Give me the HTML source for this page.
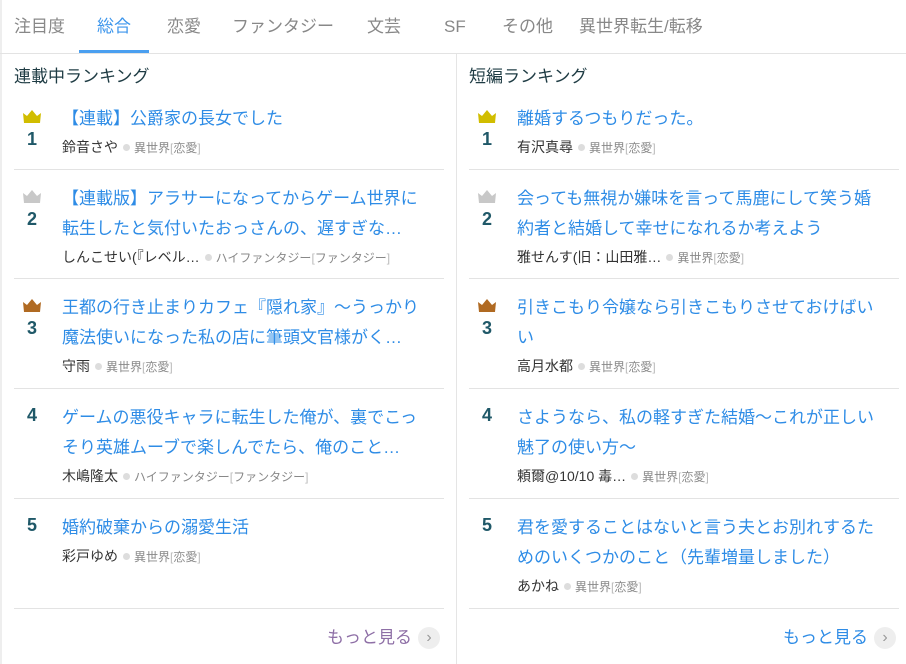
<!DOCTYPE html><html><head><meta charset="utf-8"><style>
*{margin:0;padding:0;box-sizing:border-box}
body{width:906px;height:664px;background:#fff;font-family:"Liberation Sans","Noto Sans CJK JP",sans-serif;position:relative;overflow:hidden}
.lb{position:absolute;left:0;top:0;width:2px;height:664px;background:#eee}
.tabs{position:absolute;left:0;top:0;width:906px;height:54px;border-bottom:1px solid #e3e3e3}
.tab{position:absolute;top:14px;font-size:17px;color:#888;line-height:26px}
.ul{position:absolute;left:79px;top:50px;width:70px;height:3px;background:#4a9ff0}
.vd{position:absolute;left:456px;top:54px;width:1px;height:610px;background:#e5e5e5}
.col{position:absolute;top:54px;width:430px}
.h{font-size:17px;color:#1f3c44;height:36px;line-height:46px;padding-left:0}
.row{position:relative;border-bottom:1px solid #e3e3e3}
.cr{position:absolute;left:9px;top:20px}
.n{position:absolute;left:4px;width:28px;text-align:center;font-size:18px;font-weight:bold;color:#1f5868}
.t{position:absolute;left:48px;top:14px;font-size:17px;line-height:30px;color:#2e8ce6;white-space:nowrap}
.a{font-size:14px;color:#333;line-height:26px}
.a .d{display:inline-block;width:7px;height:7px;border-radius:50%;background:#ddd;margin:0 4px 1px 5px}
.a .g{font-size:12px;color:#888}.a .g i{font-style:normal;color:#bbb}
.more{position:absolute;top:625px;font-size:17px;line-height:26px;display:flex;align-items:center}
.more span{display:inline-block;width:22px;height:22px;border-radius:50%;background:#eee;margin-left:6px;text-align:center;font-size:16px;line-height:21px;color:#999}
</style></head><body>
<div class="lb"></div>
<div class="tabs">
<div class="tab" style="left:14px">注目度</div>
<div class="tab" style="left:97px;color:#3d96ec">総合</div>
<div class="tab" style="left:167px">恋愛</div>
<div class="tab" style="left:232px">ファンタジー</div>
<div class="tab" style="left:367px">文芸</div>
<div class="tab" style="left:444px">SF</div>
<div class="tab" style="left:502px">その他</div>
<div class="tab" style="left:579px">異世界転生/転移</div>
<div class="ul"></div>
</div>
<div class="vd"></div>

<div class="col" style="left:14px">
<div class="h">連載中ランキング</div>
<div class="row" style="height:80px"><svg class="cr" width="18" height="13" viewBox="0 0 18 13"><path d="M0 3L4 6L9 0L14 6L18 3L17 13H1Z" fill="#d1bd00"/></svg><div class="n" style="top:39px">1</div>
<div class="t">【連載】公爵家の長女でした<div class="a">鈴音さや<span class="d"></span><span class="g">異世界<i>[</i>恋愛<i>]</i></span></div></div></div>
<div class="row" style="height:109px"><svg class="cr" width="18" height="13" viewBox="0 0 18 13"><path d="M0 3L4 6L9 0L14 6L18 3L17 13H1Z" fill="#c8c8c8"/></svg><div class="n" style="top:39px">2</div>
<div class="t">【連載版】アラサーになってからゲーム世界に<br>転生したと気付いたおっさんの、遅すぎな…<div class="a">しんこせい(『レベル…<span class="d"></span><span class="g">ハイファンタジー<i>[</i>ファンタジー<i>]</i></span></div></div></div>
<div class="row" style="height:110px"><svg class="cr" width="18" height="13" viewBox="0 0 18 13"><path d="M0 3L4 6L9 0L14 6L18 3L17 13H1Z" fill="#b06a22"/></svg><div class="n" style="top:39px">3</div>
<div class="t">王都の行き止まりカフェ『隠れ家』～うっかり<br>魔法使いになった私の店に筆頭文官様がく…<div class="a">守雨<span class="d"></span><span class="g">異世界<i>[</i>恋愛<i>]</i></span></div></div></div>
<div class="row" style="height:110px"><div class="n" style="top:16px">4</div>
<div class="t">ゲームの悪役キャラに転生した俺が、裏でこっ<br>そり英雄ムーブで楽しんでたら、俺のこと…<div class="a">木嶋隆太<span class="d"></span><span class="g">ハイファンタジー<i>[</i>ファンタジー<i>]</i></span></div></div></div>
<div class="row" style="height:110px"><div class="n" style="top:16px">5</div>
<div class="t">婚約破棄からの溺愛生活<div class="a">彩戸ゆめ<span class="d"></span><span class="g">異世界<i>[</i>恋愛<i>]</i></span></div></div></div>
</div>
<div class="more" style="left:327px;color:#8e6fa6">もっと見る<span>›</span></div>

<div class="col" style="left:469px">
<div class="h">短編ランキング</div>
<div class="row" style="height:80px"><svg class="cr" width="18" height="13" viewBox="0 0 18 13"><path d="M0 3L4 6L9 0L14 6L18 3L17 13H1Z" fill="#d1bd00"/></svg><div class="n" style="top:39px">1</div>
<div class="t">離婚するつもりだった。<div class="a">有沢真尋<span class="d"></span><span class="g">異世界<i>[</i>恋愛<i>]</i></span></div></div></div>
<div class="row" style="height:109px"><svg class="cr" width="18" height="13" viewBox="0 0 18 13"><path d="M0 3L4 6L9 0L14 6L18 3L17 13H1Z" fill="#c8c8c8"/></svg><div class="n" style="top:39px">2</div>
<div class="t">会っても無視か嫌味を言って馬鹿にして笑う婚<br>約者と結婚して幸せになれるか考えよう<div class="a">雅せんす(旧：山田雅…<span class="d"></span><span class="g">異世界<i>[</i>恋愛<i>]</i></span></div></div></div>
<div class="row" style="height:110px"><svg class="cr" width="18" height="13" viewBox="0 0 18 13"><path d="M0 3L4 6L9 0L14 6L18 3L17 13H1Z" fill="#b06a22"/></svg><div class="n" style="top:39px">3</div>
<div class="t">引きこもり令嬢なら引きこもりさせておけばい<br>い<div class="a">高月水都<span class="d"></span><span class="g">異世界<i>[</i>恋愛<i>]</i></span></div></div></div>
<div class="row" style="height:110px"><div class="n" style="top:16px">4</div>
<div class="t">さようなら、私の軽すぎた結婚～これが正しい<br>魅了の使い方～<div class="a">頼爾@10/10 毒…<span class="d"></span><span class="g">異世界<i>[</i>恋愛<i>]</i></span></div></div></div>
<div class="row" style="height:110px"><div class="n" style="top:16px">5</div>
<div class="t">君を愛することはないと言う夫とお別れするた<br>めのいくつかのこと（先輩増量しました）<div class="a">あかね<span class="d"></span><span class="g">異世界<i>[</i>恋愛<i>]</i></span></div></div></div>
</div>
<div class="more" style="left:783px;color:#2e8ce6">もっと見る<span>›</span></div>
</body></html>
